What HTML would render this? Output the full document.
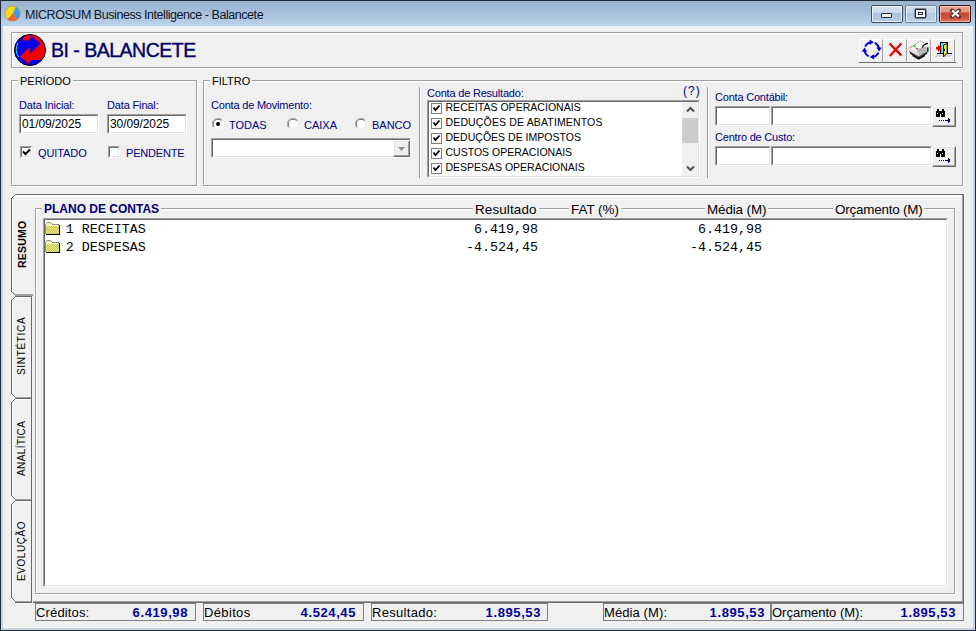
<!DOCTYPE html>
<html><head><meta charset="utf-8">
<style>
*{box-sizing:border-box;margin:0;padding:0}
html,body{width:976px;height:631px;overflow:hidden;background:#1c2b3b}
body{position:relative;font-family:"Liberation Sans",sans-serif;font-size:11px;color:#000}
.a{position:absolute}
.t{position:absolute;white-space:pre;line-height:1}
#frame{position:absolute;left:1px;top:1px;width:974px;height:629px;background:linear-gradient(#a6b8cb,#9bb5d0 1px,#9fb8d3 6px,#b9d1e9 24px,#c6d4e2 26px,#c8d4e0)}
#client::before{content:"";position:absolute;left:0;top:0;width:1px;height:100%;background:#e8f0fa}
#client::after{content:"";position:absolute;right:0;top:0;width:3px;height:100%;background:linear-gradient(90deg,#eef2f6,#e6eef8)}
#client{position:absolute;left:3px;top:26px;width:970px;height:602px;background:#f0f0f0}
.etch{position:absolute;border:1px solid #a0a0a0;box-shadow:1px 1px 0 #fff inset, 1px 1px 0 #fff}
.sunk{position:absolute;background:#fff;border-top:1px solid #a0a0a0;border-left:1px solid #a0a0a0;border-right:1px solid #fff;border-bottom:1px solid #fff}
.sunk::before{content:"";position:absolute;left:0;top:0;right:0;bottom:0;border-top:1px solid #696969;border-left:1px solid #696969;border-right:1px solid #e3e3e3;border-bottom:1px solid #e3e3e3}
.navy{color:#000080}
.cap{position:absolute;background:#f0f0f0;padding:0 2px;white-space:pre;line-height:1}
.chk{position:absolute;width:12px;height:12px;background:#fff;border-top:1px solid #a0a0a0;border-left:1px solid #a0a0a0;border-right:1px solid #fff;border-bottom:1px solid #fff}
.chk::before{content:"";position:absolute;left:0;top:0;right:0;bottom:0;border-top:1px solid #696969;border-left:1px solid #696969;border-right:1px solid #e3e3e3;border-bottom:1px solid #e3e3e3}
.btn{position:absolute;background:#f0f0f0;border-top:1px solid #fff;border-left:1px solid #fff;border-right:1px solid #696969;border-bottom:1px solid #696969}
.btn::before{content:"";position:absolute;left:0;top:0;right:0;bottom:0;border-right:1px solid #a0a0a0;border-bottom:1px solid #a0a0a0;border-left:1px solid #e3e3e3;border-top:1px solid #e3e3e3}
.tb{position:absolute;width:24px;height:23px;border-top:1px solid #fff;border-left:1px solid #fff;border-right:1px solid #a0a0a0}
.cb{position:absolute;width:13px;height:13px}
.panel{position:absolute;border:1px solid #808080;background:#f0f0f0}
.sv{font-size:13px;font-weight:bold;color:#00009c;letter-spacing:0.6px}
.mono{font-family:"Liberation Mono",monospace;font-size:13.33px}
</style></head><body>
<div id="frame"></div>
<!-- title bar -->
<svg class="a" style="left:4px;top:5px" width="18" height="18" viewBox="0 0 18 18">
  <circle cx="8.5" cy="8.5" r="7.6" fill="#f7d81a"/>
  <path d="M9 8.6 L11.94 1.72 A7.6 7.6 0 0 1 13.28 14.42 Z" fill="#3c9cf0"/>
  <path d="M9 8.6 L13.28 14.42 A7.6 7.6 0 0 1 3.47 14.2 Z" fill="#f06432"/>
  <circle cx="8.5" cy="8.5" r="7.6" fill="none" stroke="#b88a30" stroke-width="0.8" stroke-opacity="0.8"/>
</svg>
<div class="t" style="left:25px;top:9px;font-size:12.5px;color:#0b1628;letter-spacing:-0.45px">MICROSUM Business Intelligence - Balancete</div>
<!-- caption buttons -->
<div class="a" style="left:871px;top:5px;width:32px;height:18px;border:1px solid #3c4a5c;border-radius:2px;background:linear-gradient(#d6e3f1,#c9d9eb 7px,#a9c1dc 7px,#b7cde6 16px)"><div class="a" style="left:0;top:0;right:0;bottom:0;border:1px solid rgba(255,255,255,0.75);border-radius:1px"></div></div>
<div class="a" style="left:881px;top:13px;width:11px;height:5px;border:1px solid #252c38;border-radius:1px;background:#f4f4f4"></div>
<div class="a" style="left:905px;top:5px;width:32px;height:18px;border:1px solid #6d7f94;border-radius:2px;background:linear-gradient(#cddcec,#c3d5ea 7px,#b0c8e2 7px,#bcd3ea 16px)"><div class="a" style="left:0;top:0;right:0;bottom:0;border:1px solid rgba(255,255,255,0.55);border-radius:1px"></div></div>
<div class="a" style="left:915px;top:9px;width:11px;height:9px;border:1px solid #252c38;border-radius:1px;background:#f4f4f4;box-shadow:0 0 0 0.4px #252c38"></div>
<div class="a" style="left:918px;top:12px;width:5px;height:3px;border:1px solid #252c38;background:#fff"></div>
<div class="a" style="left:939px;top:5px;width:32px;height:18px;border:1px solid #3a1410;border-radius:2px;background:linear-gradient(#eaa493,#e0907c 6px,#c4462c 7px,#cf5a40 13px,#e08a72 17px)"><div class="a" style="left:0;top:0;right:0;bottom:0;border:1px solid rgba(255,220,210,0.6);border-radius:1px"></div></div>
<svg class="a" style="left:949px;top:8px" width="13" height="11" viewBox="0 0 13 11"><path d="M3 2.5 L10 8.5 M10 2.5 L3 8.5" stroke="#4a2a25" stroke-width="3.8" stroke-linecap="round"/><path d="M3 2.5 L10 8.5 M10 2.5 L3 8.5" stroke="#fff" stroke-width="2.3"/></svg>

<div id="client">
</div>

<!-- header panel -->
<div class="etch" style="left:11px;top:32px;width:952px;height:36px"></div>
<svg class="a" style="left:14px;top:34px" width="32" height="32" viewBox="0 0 32 32">
  <defs><clipPath id="lc"><circle cx="16" cy="16" r="15"/></clipPath></defs>
  <circle cx="16" cy="16" r="15.5" fill="#0000f0" stroke="#000" stroke-width="1"/>
  <g clip-path="url(#lc)">
  <path d="M8 6.5 L16.3 6.5 L16.3 -1 L12 -1 Z" fill="#f00000"/>
  <path d="M16.3 1.5 L26.5 9.5 L16.5 19 L15.2 13 L6 22.5 L15.2 30.5 L16.3 26 L26 26 L34 23 L34 -1 L17 -1 Z" fill="#f00000"/>
  </g>
  <path d="M4 9 A13.5 13.5 0 0 0 4.5 23" fill="none" stroke="#40e0f0" stroke-width="1"/>
</svg>
<div class="t" style="left:51px;top:41.2px;font-size:19.5px;color:#000068;letter-spacing:-0.5px;-webkit-text-stroke:0.35px #000068">BI - BALANCETE</div>
<!-- toolbar buttons -->
<div class="tb" style="left:859px;top:39px"></div>
<div class="tb" style="left:883px;top:39px"></div>
<div class="tb" style="left:907px;top:39px"></div>
<div class="tb" style="left:931px;top:39px"></div>
<div class="a" style="left:859px;top:62px;width:97px;height:1px;background:#696969"></div>
<svg class="a" style="left:859px;top:39px" width="24" height="23" viewBox="0 0 24 23"><path d="M6.13 7.63 A7.3 7.3 0 0 1 11.53 3.41" fill="none" stroke="#0000c8" stroke-width="1.8"/><path d="M14.80 3.30 L10.60 0.60 L10.60 6.00 Z" fill="#0000c8"/><path d="M15.77 3.93 A7.3 7.3 0 0 1 19.99 9.33" fill="none" stroke="#0000c8" stroke-width="1.8"/><path d="M20.10 12.60 L22.80 8.40 L17.40 8.40 Z" fill="#0000c8"/><path d="M19.47 13.57 A7.3 7.3 0 0 1 14.07 17.79" fill="none" stroke="#0000c8" stroke-width="1.8"/><path d="M10.80 17.90 L15.00 20.60 L15.00 15.20 Z" fill="#0000c8"/><path d="M9.83 17.27 A7.3 7.3 0 0 1 5.61 11.87" fill="none" stroke="#0000c8" stroke-width="1.8"/><path d="M5.50 8.60 L2.80 12.80 L8.20 12.80 Z" fill="#0000c8"/></svg>
<svg class="a" style="left:883px;top:39px" width="24" height="23" viewBox="0 0 24 23">
 <path d="M6.5 4.5 L18.3 16.3" stroke="#e00000" stroke-width="2.4"/>
 <path d="M18.3 4.5 L6.8 17" stroke="#e00000" stroke-width="2.1"/>
</svg>
<svg class="a" style="left:907px;top:39px" width="24" height="23" viewBox="0 0 24 23">
 <path d="M2.2 9 L2.2 12.5 L11.7 19.5 L20.9 12.5 L20.9 8.8 L11.7 14.5 Z" fill="#fff"/>
 <path d="M2.2 12.2 L11.7 17.4 L20.9 12.2" fill="none" stroke="#000" stroke-width="1.1"/>
 <path d="M3 14.1 L11.7 19.0 L20.2 14.1" fill="none" stroke="#000" stroke-width="1.1"/>
 <path d="M5.5 16.6 L11.7 20.2 L18 16.6" fill="none" stroke="#000" stroke-width="1.1"/>
 <path d="M2.2 9 L11 4 L20.9 8.8 L11.7 14.5 Z" fill="#f4f4f4"/>
 <path d="M2.2 9 L2.2 12.2 L11.7 17.4 L11.7 14.5 Z" fill="#dcdcdc"/>
 <path d="M11.7 17.4 L20.9 12.2 L20.9 8.8 L16 6.8 L9.5 11.8 L11.7 14.5 Z" fill="#b8b8b8"/>
 <path d="M2.2 9 L11 4" stroke="#707070" stroke-width="1" stroke-dasharray="1.3 0.8"/>
 <path d="M9.5 5.2 L13.5 2.2 L17.5 4 L15.3 8.4 L12 8.5 Z" fill="#fff"/>
 <path d="M11 3.6 L13.5 2.2 L17.5 4" fill="none" stroke="#808080" stroke-width="0.9" stroke-dasharray="1.2 0.8"/>
 <path d="M15.3 8.6 Q16.3 5 21 4.4" fill="none" stroke="#000" stroke-width="1.1"/>
 <path d="M20.9 8.3 L20.9 12.4" stroke="#000" stroke-width="1.2"/>
 <rect x="6.5" y="6.5" width="2.4" height="1.8" rx="0.9" fill="#30c040"/>
 <rect x="9" y="9" width="2.2" height="1.5" rx="0.7" fill="#d03040"/>
</svg>
<svg class="a" style="left:931px;top:39px" width="24" height="23" viewBox="0 0 24 23" shape-rendering="crispEdges">
 <rect x="9" y="3" width="8" height="12" fill="#000"/>
 <rect x="10" y="4" width="3" height="10" fill="#48dce8"/>
 <rect x="13" y="4" width="3" height="10" fill="#f0f0f0"/>
 <path d="M12.6 6 L16.2 4.4 L16.2 14.2 L12.6 17.8 Z" fill="#f0f040" stroke="#000" stroke-width="1" shape-rendering="auto"/>
 <rect x="13" y="10" width="1" height="2" fill="#000"/>
 <rect x="6" y="14" width="3" height="1" fill="#000"/><rect x="17" y="14" width="4" height="1" fill="#000"/>
 <path d="M5 8 H7 V6.2 H8 L10.6 9.3 L8 12.4 H7 V10.6 H5 Z" fill="#f00000" shape-rendering="auto"/>
 <path d="M5.2 17.5 l1.6 -1.8 M8.2 17.5 l1.6 -1.8 M15.2 17.5 l1.6 -1.8 M18.2 17.5 l1.6 -1.8" stroke="#5a5a5a" stroke-width="1" stroke-dasharray="1.1 0.5" shape-rendering="auto"/>
</svg>

<!-- PERIODO -->
<div class="etch" style="left:11px;top:80px;width:186px;height:106px"></div>
<div class="cap" style="left:18px;top:76px">PERÍODO</div>
<div class="t navy" style="left:19px;top:100px;letter-spacing:-0.15px">Data Inicial:</div>
<div class="t navy" style="left:107px;top:100px;letter-spacing:-0.15px">Data Final:</div>
<div class="sunk" style="left:19px;top:114px;width:80px;height:20px"></div>
<div class="t" style="left:22px;top:118px;font-size:12px;letter-spacing:-0.1px">01/09/2025</div>
<div class="sunk" style="left:107px;top:114px;width:80px;height:20px"></div>
<div class="t" style="left:110px;top:118px;font-size:12px;letter-spacing:-0.1px">30/09/2025</div>
<div class="chk" style="left:20px;top:146px"></div>
<svg class="a" style="left:22px;top:148px" width="9" height="9" viewBox="0 0 9 9"><path d="M1 3.5 L3.5 6 L8 1.5" fill="none" stroke="#000" stroke-width="2"/></svg>
<div class="t navy" style="left:38px;top:147.5px;letter-spacing:-0.1px">QUITADO</div>
<div class="chk" style="left:108px;top:146px"></div>
<div class="t navy" style="left:126px;top:147.5px;letter-spacing:-0.2px">PENDENTE</div>

<!-- FILTRO -->
<div class="etch" style="left:203px;top:80px;width:760px;height:106px"></div>
<div class="cap" style="left:210px;top:76px">FILTRO</div>
<div class="t navy" style="left:211px;top:100px;letter-spacing:-0.2px">Conta de Movimento:</div>
<!-- radios -->
<svg class="a" style="left:212px;top:118px" width="12" height="12" viewBox="0 0 12 12">
 <path d="M10.5 2.5 A5.5 5.5 0 0 0 1.5 9.5" fill="none" stroke="#a0a0a0"/><path d="M9.5 2.9 A4.6 4.6 0 0 0 2.5 9" fill="none" stroke="#696969"/>
 <path d="M1.5 9.5 A5.5 5.5 0 0 0 10.5 2.5" fill="none" stroke="#fff"/>
 <circle cx="6" cy="6" r="4" fill="#fff"/><circle cx="6" cy="6" r="2" fill="#000"/></svg>
<div class="t navy" style="left:229px;top:120px">TODAS</div>
<svg class="a" style="left:287px;top:118px" width="12" height="12" viewBox="0 0 12 12">
 <path d="M10.5 2.5 A5.5 5.5 0 0 0 1.5 9.5" fill="none" stroke="#a0a0a0"/><path d="M9.5 2.9 A4.6 4.6 0 0 0 2.5 9" fill="none" stroke="#696969"/>
 <circle cx="6" cy="6" r="4" fill="#fff"/></svg>
<div class="t navy" style="left:304px;top:120px">CAIXA</div>
<svg class="a" style="left:355px;top:118px" width="12" height="12" viewBox="0 0 12 12">
 <path d="M10.5 2.5 A5.5 5.5 0 0 0 1.5 9.5" fill="none" stroke="#a0a0a0"/><path d="M9.5 2.9 A4.6 4.6 0 0 0 2.5 9" fill="none" stroke="#696969"/>
 <circle cx="6" cy="6" r="4" fill="#fff"/></svg>
<div class="t navy" style="left:372px;top:120px">BANCO</div>
<!-- combo -->
<div class="sunk" style="left:211px;top:138px;width:200px;height:20px"></div>
<div class="btn" style="left:393px;top:140px;width:17px;height:17px"></div>
<svg class="a" style="left:398px;top:147px" width="8" height="5" viewBox="0 0 8 5"><path d="M0 0 H7 L3.5 4 Z" fill="#8c8c8c"/></svg>
<!-- separators -->
<div class="a" style="left:419px;top:87px;width:2px;height:91px;border-left:1px solid #a0a0a0;border-right:1px solid #fff"></div>
<div class="a" style="left:707px;top:87px;width:2px;height:91px;border-left:1px solid #a0a0a0;border-right:1px solid #fff"></div>
<!-- conta de resultado -->
<div class="t navy" style="left:427px;top:88px;letter-spacing:-0.2px">Conta de Resultado:</div>
<div class="t navy" style="left:683px;top:85px;font-size:12px;letter-spacing:1px">(?)</div>
<div class="sunk" style="left:427px;top:100px;width:273px;height:78px"></div>
<div class="a" style="left:682px;top:102px;width:16px;height:74px;background:#f0f0f0"></div>
<div class="a" style="left:682px;top:118px;width:16px;height:25px;background:#cdcdcd"></div>
<svg class="a" style="left:686px;top:106px" width="9" height="7" viewBox="0 0 9 7"><path d="M1 5.5 L4.5 2 L8 5.5" fill="none" stroke="#505050" stroke-width="2"/></svg>
<svg class="a" style="left:686px;top:165px" width="9" height="7" viewBox="0 0 9 7"><path d="M1 1.5 L4.5 5 L8 1.5" fill="none" stroke="#505050" stroke-width="2"/></svg>
<div id="lst"></div>
<div class="a" style="left:431px;top:103px;width:11px;height:11px;border:1px solid #808080;background:#fff"></div><svg class="a" style="left:432px;top:104px" width="9" height="9" viewBox="0 0 9 9"><path d="M1.5 3.5 L3.5 6 L7.5 1.5" fill="none" stroke="#000" stroke-width="1.8"/></svg><div class="t" style="left:445.5px;top:102px;font-size:10.5px;letter-spacing:0.03px">RECEITAS OPERACIONAIS</div>
<div class="a" style="left:431px;top:118px;width:11px;height:11px;border:1px solid #808080;background:#fff"></div><svg class="a" style="left:432px;top:119px" width="9" height="9" viewBox="0 0 9 9"><path d="M1.5 3.5 L3.5 6 L7.5 1.5" fill="none" stroke="#000" stroke-width="1.8"/></svg><div class="t" style="left:445.5px;top:117px;font-size:10.5px;letter-spacing:0.15px">DEDUÇÕES DE ABATIMENTOS</div>
<div class="a" style="left:431px;top:133px;width:11px;height:11px;border:1px solid #808080;background:#fff"></div><svg class="a" style="left:432px;top:134px" width="9" height="9" viewBox="0 0 9 9"><path d="M1.5 3.5 L3.5 6 L7.5 1.5" fill="none" stroke="#000" stroke-width="1.8"/></svg><div class="t" style="left:445.5px;top:132px;font-size:10.5px;letter-spacing:0.015px">DEDUÇÕES DE IMPOSTOS</div>
<div class="a" style="left:431px;top:148px;width:11px;height:11px;border:1px solid #808080;background:#fff"></div><svg class="a" style="left:432px;top:149px" width="9" height="9" viewBox="0 0 9 9"><path d="M1.5 3.5 L3.5 6 L7.5 1.5" fill="none" stroke="#000" stroke-width="1.8"/></svg><div class="t" style="left:445.5px;top:147px;font-size:10.5px;letter-spacing:0.01px">CUSTOS OPERACIONAIS</div>
<div class="a" style="left:431px;top:163px;width:11px;height:11px;border:1px solid #808080;background:#fff"></div><svg class="a" style="left:432px;top:164px" width="9" height="9" viewBox="0 0 9 9"><path d="M1.5 3.5 L3.5 6 L7.5 1.5" fill="none" stroke="#000" stroke-width="1.8"/></svg><div class="t" style="left:445.5px;top:162px;font-size:10.5px;letter-spacing:-0.01px">DESPESAS OPERACIONAIS</div>

<!-- conta contabil -->
<div class="t navy" style="left:715px;top:92px;letter-spacing:-0.2px">Conta Contábil:</div>
<div class="sunk" style="left:715px;top:106px;width:56px;height:20px"></div>
<div class="sunk" style="left:771px;top:106px;width:161px;height:20px"></div>
<div class="btn" style="left:932px;top:106px;width:24px;height:21px"></div>
<svg class="a" style="left:931px;top:106px" width="24" height="21" viewBox="0 0 24 21" shape-rendering="crispEdges">
<rect x="6" y="3" width="2" height="3" fill="#000"/><rect x="11" y="3" width="2" height="3" fill="#000"/>
<rect x="5" y="5" width="4" height="6" fill="#000"/><rect x="10" y="5" width="4" height="6" fill="#000"/><rect x="9" y="5" width="1" height="3" fill="#000"/>
<rect x="6" y="7" width="1" height="1" fill="#fff"/><rect x="11" y="7" width="1" height="1" fill="#fff"/>
<rect x="8" y="14" width="1" height="1" fill="#000080"/><rect x="10" y="14" width="1" height="1" fill="#000080"/><rect x="12" y="14" width="1" height="1" fill="#000080"/><rect x="14" y="14" width="5" height="1" fill="#000080"/>
<rect x="17" y="12" width="1" height="5" fill="#000080"/><rect x="18" y="13" width="1" height="3" fill="#000080"/>
</svg>
<div class="t navy" style="left:715px;top:132px;letter-spacing:-0.2px">Centro de Custo:</div>
<div class="sunk" style="left:715px;top:146px;width:56px;height:20px"></div>
<div class="sunk" style="left:771px;top:146px;width:161px;height:20px"></div>
<div class="btn" style="left:932px;top:146px;width:24px;height:21px"></div>
<svg class="a" style="left:931px;top:146px" width="24" height="21" viewBox="0 0 24 21" shape-rendering="crispEdges">
<rect x="6" y="3" width="2" height="3" fill="#000"/><rect x="11" y="3" width="2" height="3" fill="#000"/>
<rect x="5" y="5" width="4" height="6" fill="#000"/><rect x="10" y="5" width="4" height="6" fill="#000"/><rect x="9" y="5" width="1" height="3" fill="#000"/>
<rect x="6" y="7" width="1" height="1" fill="#fff"/><rect x="11" y="7" width="1" height="1" fill="#fff"/>
<rect x="8" y="14" width="1" height="1" fill="#000080"/><rect x="10" y="14" width="1" height="1" fill="#000080"/><rect x="12" y="14" width="1" height="1" fill="#000080"/><rect x="14" y="14" width="5" height="1" fill="#000080"/>
<rect x="17" y="12" width="1" height="5" fill="#000080"/><rect x="18" y="13" width="1" height="3" fill="#000080"/>
</svg>

<!-- tabs & page -->
<div class="a" style="left:15px;top:194px;width:948px;height:1px;background:#6a6a6a"></div>
<div class="a" style="left:15px;top:195px;width:946px;height:2px;background:#fff"></div>
<div class="a" style="left:962px;top:195px;width:1px;height:407px;background:#a0a0a0"></div>
<div class="a" style="left:963px;top:194px;width:1px;height:409px;background:#696969"></div>
<div class="a" style="left:33px;top:601px;width:930px;height:1px;background:#a0a0a0"></div>
<div class="a" style="left:33px;top:602px;width:931px;height:1px;background:#696969"></div>
<svg class="a" style="left:0;top:0" width="40" height="631" shape-rendering="crispEdges">
<rect x="15" y="194" width="18" height="1" fill="#6a6a6a"/><rect x="14" y="195" width="1" height="1" fill="#6a6a6a"/><rect x="13" y="196" width="1" height="1" fill="#6a6a6a"/><rect x="12" y="197" width="1" height="1" fill="#6a6a6a"/><rect x="11" y="198" width="1" height="94" fill="#696969"/><rect x="12" y="198" width="1" height="94" fill="#ffffff"/><rect x="15" y="195" width="18" height="1" fill="#ffffff"/><rect x="14" y="196" width="1" height="1" fill="#ffffff"/><rect x="13" y="197" width="1" height="1" fill="#ffffff"/><rect x="12" y="292" width="1" height="1" fill="#696969"/><rect x="13" y="293" width="1" height="1" fill="#696969"/><rect x="14" y="294" width="1" height="1" fill="#a0a0a0"/><rect x="15" y="294" width="18" height="2" fill="#a0a0a0"/><rect x="15" y="296" width="17" height="1" fill="#696969"/><rect x="14" y="297" width="1" height="1" fill="#696969"/><rect x="13" y="298" width="1" height="1" fill="#696969"/><rect x="12" y="299" width="1" height="1" fill="#696969"/><rect x="11" y="300" width="1" height="94" fill="#696969"/><rect x="12" y="300" width="1" height="94" fill="#ffffff"/><rect x="15" y="297" width="16" height="1" fill="#ffffff"/><rect x="14" y="298" width="1" height="1" fill="#ffffff"/><rect x="13" y="299" width="1" height="1" fill="#ffffff"/><rect x="31" y="296" width="1" height="102" fill="#696969"/><rect x="12" y="394" width="1" height="1" fill="#696969"/><rect x="13" y="395" width="1" height="1" fill="#696969"/><rect x="14" y="396" width="1" height="1" fill="#696969"/><rect x="15" y="397" width="16" height="1" fill="#a0a0a0"/><rect x="15" y="398" width="17" height="1" fill="#696969"/><rect x="14" y="399" width="1" height="1" fill="#696969"/><rect x="13" y="400" width="1" height="1" fill="#696969"/><rect x="12" y="401" width="1" height="1" fill="#696969"/><rect x="11" y="402" width="1" height="94" fill="#696969"/><rect x="12" y="402" width="1" height="94" fill="#ffffff"/><rect x="15" y="399" width="16" height="1" fill="#ffffff"/><rect x="14" y="400" width="1" height="1" fill="#ffffff"/><rect x="13" y="401" width="1" height="1" fill="#ffffff"/><rect x="31" y="398" width="1" height="102" fill="#696969"/><rect x="12" y="496" width="1" height="1" fill="#696969"/><rect x="13" y="497" width="1" height="1" fill="#696969"/><rect x="14" y="498" width="1" height="1" fill="#696969"/><rect x="15" y="499" width="16" height="1" fill="#a0a0a0"/><rect x="15" y="500" width="17" height="1" fill="#696969"/><rect x="14" y="501" width="1" height="1" fill="#696969"/><rect x="13" y="502" width="1" height="1" fill="#696969"/><rect x="12" y="503" width="1" height="1" fill="#696969"/><rect x="11" y="504" width="1" height="94" fill="#696969"/><rect x="12" y="504" width="1" height="94" fill="#ffffff"/><rect x="15" y="501" width="16" height="1" fill="#ffffff"/><rect x="14" y="502" width="1" height="1" fill="#ffffff"/><rect x="13" y="503" width="1" height="1" fill="#ffffff"/><rect x="31" y="500" width="1" height="102" fill="#696969"/><rect x="12" y="598" width="1" height="1" fill="#696969"/><rect x="13" y="599" width="1" height="1" fill="#696969"/><rect x="14" y="600" width="1" height="1" fill="#696969"/><rect x="15" y="601" width="16" height="1" fill="#a0a0a0"/><rect x="15" y="602" width="17" height="1" fill="#696969"/>
</svg>
<div class="t" style="left:16.9px;top:267.6px;font-weight:bold;font-size:10.5px;letter-spacing:0.2px;transform:rotate(-90deg);transform-origin:left top">RESUMO</div>
<div class="t" style="left:16.5px;top:374.6px;font-size:10px;letter-spacing:0.67px;transform:rotate(-90deg);transform-origin:left top">SINTÉTICA</div>
<div class="t" style="left:16.5px;top:476px;font-size:10px;letter-spacing:0.4px;transform:rotate(-90deg);transform-origin:left top">ANALÍTICA</div>
<div class="t" style="left:16.5px;top:580.8px;font-size:10px;letter-spacing:0.57px;transform:rotate(-90deg);transform-origin:left top">EVOLUÇÃO</div>

<!-- plano de contas group -->
<div class="etch" style="left:35px;top:208px;width:920px;height:386px"></div>
<div class="cap" style="left:42px;top:203px;font-weight:bold;font-size:12px;color:#000070">PLANO DE CONTAS</div>
<div class="cap" style="left:473px;top:202.6px;font-size:13.4px;letter-spacing:0.15px">Resultado</div>
<div class="cap" style="left:569px;top:202.6px;font-size:13.4px;letter-spacing:0px">FAT (%)</div>
<div class="cap" style="left:705px;top:202.6px;font-size:13.4px;letter-spacing:-0.1px">Média (M)</div>
<div class="cap" style="left:833px;top:202.6px;font-size:13.4px;letter-spacing:-0.2px">Orçamento (M)</div>
<div class="sunk" style="left:43px;top:218px;width:905px;height:369px"></div>
<svg class="a" style="left:45px;top:222px" width="15" height="14" viewBox="0 0 15 14" shape-rendering="crispEdges">
<defs><pattern id="dth222" width="2" height="2" patternUnits="userSpaceOnUse"><rect width="2" height="2" fill="#e8e880"/><rect width="1" height="1" fill="#c8c850"/><rect x="1" y="1" width="1" height="1" fill="#c8c850"/></pattern></defs>
<rect x="1" y="1" width="5" height="3" fill="#f0f0a8"/>
<rect x="1" y="3" width="13" height="9" fill="url(#dth222)"/>
<rect x="1" y="3" width="12" height="1" fill="#f8f8c8"/>
<rect x="2" y="0" width="4" height="1" fill="#909090"/><rect x="1" y="1" width="1" height="1" fill="#909090"/><rect x="6" y="1" width="1" height="1" fill="#909090"/><rect x="7" y="2" width="6" height="1" fill="#909090"/>
<rect x="0" y="2" width="1" height="10" fill="#909090"/>
<rect x="1" y="12" width="14" height="1" fill="#000"/><rect x="14" y="3" width="1" height="10" fill="#000"/><rect x="13" y="2" width="1" height="1" fill="#606060"/>
</svg>
<svg class="a" style="left:45px;top:240px" width="15" height="14" viewBox="0 0 15 14" shape-rendering="crispEdges">
<defs><pattern id="dth240" width="2" height="2" patternUnits="userSpaceOnUse"><rect width="2" height="2" fill="#e8e880"/><rect width="1" height="1" fill="#c8c850"/><rect x="1" y="1" width="1" height="1" fill="#c8c850"/></pattern></defs>
<rect x="1" y="1" width="5" height="3" fill="#f0f0a8"/>
<rect x="1" y="3" width="13" height="9" fill="url(#dth240)"/>
<rect x="1" y="3" width="12" height="1" fill="#f8f8c8"/>
<rect x="2" y="0" width="4" height="1" fill="#909090"/><rect x="1" y="1" width="1" height="1" fill="#909090"/><rect x="6" y="1" width="1" height="1" fill="#909090"/><rect x="7" y="2" width="6" height="1" fill="#909090"/>
<rect x="0" y="2" width="1" height="10" fill="#909090"/>
<rect x="1" y="12" width="14" height="1" fill="#000"/><rect x="14" y="3" width="1" height="10" fill="#000"/><rect x="13" y="2" width="1" height="1" fill="#606060"/>
</svg>
<div class="t mono" style="left:65.8px;top:223px">1 RECEITAS</div>
<div class="t mono" style="left:65.8px;top:241px">2 DESPESAS</div>
<div class="t mono" style="left:474px;top:223px">6.419,98</div>
<div class="t mono" style="left:466px;top:241px">-4.524,45</div>
<div class="t mono" style="left:698px;top:223px">6.419,98</div>
<div class="t mono" style="left:690px;top:241px">-4.524,45</div>

<!-- status bar -->
<div class="panel" style="left:35px;top:603px;width:161px;height:18px"></div>
<div class="panel" style="left:203px;top:603px;width:161px;height:18px"></div>
<div class="panel" style="left:371px;top:603px;width:177px;height:18px"></div>
<div class="panel" style="left:603px;top:603px;width:168px;height:18px"></div>
<div class="panel" style="left:771px;top:603px;width:193px;height:18px"></div>
<div class="t" style="left:36px;top:606px;font-size:13px;letter-spacing:0.15px">Créditos:</div>
<div class="t" style="left:204px;top:606px;font-size:13px;letter-spacing:0.35px">Débitos</div>
<div class="t" style="left:372px;top:606px;font-size:13px;letter-spacing:0.3px">Resultado:</div>
<div class="t" style="left:604px;top:606px;font-size:13px;letter-spacing:0.1px">Média (M):</div>
<div class="t" style="left:772px;top:606px;font-size:13px">Orçamento (M):</div>
<div class="t sv" style="right:788px;top:606px">6.419,98</div>
<div class="t sv" style="right:620px;top:606px">4.524,45</div>
<div class="t sv" style="right:435px;top:606px">1.895,53</div>
<div class="t sv" style="right:211px;top:606px">1.895,53</div>
<div class="t sv" style="right:20px;top:606px">1.895,53</div>
</body></html>
